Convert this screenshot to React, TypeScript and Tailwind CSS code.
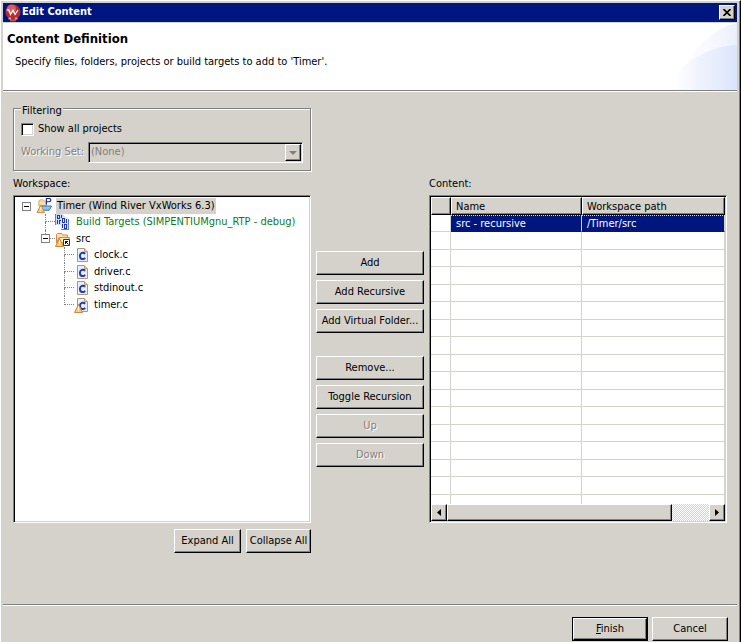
import type { ReactNode } from "react";

const raised =
  "border border-t-white border-l-white border-r-black border-b-black bg-[#d5d2cc] shadow-[inset_-1px_-1px_0_#808080]";
const sunken =
  "border border-t-[#808080] border-l-[#808080] border-r-white border-b-white p-px shadow-[inset_1px_1px_0_#000,inset_-1px_-1px_0_#d5d2cc]";
const etched = "text-[#808080] [text-shadow:1px_1px_0_#fff]";

function PushButton({
  children,
  disabled,
  className = "",
}: {
  children: ReactNode;
  disabled?: boolean;
  className?: string;
}) {
  return (
    <button
      type="button"
      disabled={disabled}
      className={`${raised} h-6 whitespace-nowrap text-center leading-[20px] ${disabled ? etched : ""} ${className}`}
    >
      {children}
    </button>
  );
}

function AppIcon() {
  return (
    <svg viewBox="0 0 16 18" className="h-[18px] w-4 shrink-0" aria-hidden="true">
      <path d="M4 13.500h8l-1.500 4h-5z" fill="#a85550" />
      <circle cx="8" cy="8" r="7.600" fill="#b92a30" />
      <circle cx="6.500" cy="5" r="4.600" fill="#d8605c" />
      <path d="M1.500 6h2.500l1.500 4.500L8 6l2 4.500L13 6" fill="none" stroke="#fff" strokeWidth="1.200" />
      <path d="M3.500 13.500h2.500v2h-2.500zM10 13.500h2.500v2h-2.500z" fill="#e49c98" />
    </svg>
  );
}

function WarningBadge() {
  return (
    <g>
      <path d="M4.500 7.500 8.500 15.500H.500z" fill="#f9c678" stroke="#c98a3a" strokeWidth="1" />
      <path d="M4 9.500h1v3H4zM4 13.500h1v1H4z" fill="#fff" />
    </g>
  );
}

function ProjectIcon() {
  return (
    <svg viewBox="0 0 17 17" className="h-4 w-[17px] shrink-0" aria-hidden="true">
      <path d="M2.500 3.500l1-1.500h4l1 1.500h2v5h-8z" fill="#f6dea0" stroke="#d3a75c" />
      <path d="M4.500 8.500H16l-2.500 4.500H6.500z" fill="#8fc4ee" stroke="#2f6fb0" />
      <path d="M10.500 7V.500h3a1.500 1.500 0 0 1 0 3.500h-3" fill="#fff" stroke="#1428c0" strokeWidth="1.200" />
      <WarningBadge />
    </svg>
  );
}

function TargetsIcon() {
  return (
    <svg viewBox="0 0 16 16" className="size-4 shrink-0" shapeRendering="crispEdges" aria-hidden="true">
      <path d="M1 0h6l3 3v8H1z" fill="#cfdcf8" />
      <path d="M6 3h6l2 2v10H6z" fill="#e4ecfc" />
      <path
        d="M2 1h3v1H2zM2 2h1v2H2zM4 2h1v2H4zM2 4h3v1H2zM6 1h1v3H6zM2 6h1v4H2zM4 6h2v1H4zM4 7h1v3H4zM7 4h3v1H7zM7 5h1v3H7zM9 5h1v3H9zM7 8h3v1H7zM11 5h1v4h-1zM7 10h1v4H7zM9 10h3v1H9zM9 11h1v3H9zM11 11h1v3h-1zM9 14h3v1H9z"
        fill="#1c35b8"
      />
      <path d="M13 5h1v10h-1zM6 15h8v1H6zM0 0h1v11H0z" fill="#5f80d8" />
    </svg>
  );
}

function SourceFolderIcon() {
  return (
    <svg viewBox="0 0 16 16" className="size-4 shrink-0" aria-hidden="true">
      <path d="M1.500 12V3.500l1-1h4l1 1.500h5V7" fill="#fbe3ae" stroke="#d08a3c" />
      <path d="M1.500 12 4 6.500h10.500L13 12z" fill="#fde9bc" stroke="#d08a3c" />
      <WarningBadge />
      <path d="M8.500 8.500h6v6h-6z" fill="#fff" stroke="#123a66" />
      <path d="M10.500 13v-2.500H13M10.500 10.500l3 3" fill="none" stroke="#000" />
    </svg>
  );
}

function CFileIcon({ warning }: { warning?: boolean }) {
  return (
    <svg viewBox="0 0 16 16" className="size-4 shrink-0" aria-hidden="true">
      <path d="M3.500 1.500h7l3 3v10h-10z" fill="#e6eefc" stroke="#a59a7c" />
      <path d="M10.500 1.500v3h3" fill="#f5d9a0" stroke="#c9a050" />
      <path
        d="M11.200 6.800C9.200 4.700 5.900 5.600 5.900 8.900s3.300 4.100 5.300 2"
        fill="none"
        stroke="#2438a8"
        strokeWidth="2"
      />
      {warning && <WarningBadge />}
    </svg>
  );
}

function Expander() {
  return (
    <button
      type="button"
      aria-label="Collapse"
      className="flex size-[9px] shrink-0 items-center justify-center border border-[#808080] bg-white"
    >
      <span className="h-px w-[5px] bg-black" />
    </button>
  );
}

function Branch({ last }: { last?: boolean }) {
  return (
    <span className="flex h-full w-[19px] shrink-0 flex-col pl-[9px]">
      <span className="h-1/2 border-b border-l border-dotted border-[#808080]" />
      <span className={last ? "h-1/2" : "h-1/2 border-l border-dotted border-[#808080]"} />
    </span>
  );
}

const files = [
  { name: "clock.c", row: "h-4" },
  { name: "driver.c", row: "h-[17px]" },
  { name: "stdinout.c", row: "h-4" },
  { name: "timer.c", row: "h-[17px]", warning: true },
];

function WorkspaceTree() {
  return (
    <ul aria-labelledby="workspace-label" className={`${sunken} h-[328px] overflow-hidden bg-white leading-4`}>
      <li className="pt-px pl-[2px]">
        <div className="flex h-4 items-center">
          <span className="flex w-[19px] shrink-0 pl-[5px]">
            <Expander />
          </span>
          <ProjectIcon />
          <span className="ml-[3px] bg-[#d5d2cc] pr-px pl-px whitespace-nowrap">Timer (Wind River VxWorks 6.3)</span>
        </div>
        <ul className="pl-[19px]">
          <li className="flex h-4 items-center">
            <Branch />
            <TargetsIcon />
            <span className="ml-[5px] whitespace-nowrap text-[#0f7a1c]">Build Targets (SIMPENTIUMgnu_RTP - debug)</span>
          </li>
          <li>
            <div className="flex h-[17px] items-center">
              <span className="flex h-full w-[19px] shrink-0 flex-col">
                <span className="ml-[9px] flex-1 border-l border-dotted border-[#808080]" />
                <span className="flex items-center pl-[5px]">
                  <Expander />
                  <span className="flex-1 border-t border-dotted border-[#808080]" />
                </span>
                <span className="flex-1" />
              </span>
              <SourceFolderIcon />
              <span className="ml-[5px]">src</span>
            </div>
            <ul className="pl-[19px]">
              {files.map((f, i) => (
                <li key={f.name} className={`flex items-center ${f.row}`}>
                  <Branch last={i === files.length - 1} />
                  <CFileIcon warning={f.warning} />
                  <span className="ml-1">{f.name}</span>
                </li>
              ))}
            </ul>
          </li>
        </ul>
      </li>
    </ul>
  );
}

const headCell =
  "h-[18px] border-t border-l border-r border-t-white border-l-white border-r-black border-b border-b-black p-0 pl-1 text-left font-normal shadow-[inset_-1px_-1px_0_#808080]";
const cell = "border-r border-b border-[#d5d2cc] p-0 pl-[5px]";
const selectedCell =
  "border-r border-t border-b border-r-[#d5d2cc] border-t-[#f0e040] border-b-[#00167f] [border-top-style:dotted] bg-[#00167f] p-0 pl-[5px]";

function ContentTable() {
  return (
    <div className={`${sunken} flex h-[328px] flex-col bg-white`}>
      <div className="min-h-0 flex-1 overflow-hidden">
        <table
          aria-labelledby="content-label"
          className="w-full table-fixed border-separate border-spacing-0 leading-[15px]"
        >
          <thead className="bg-[#d5d2cc]">
            <tr>
              <th className={`${headCell} w-5`} aria-label="Marker" />
              <th className={`${headCell} w-[131px]`}>Name</th>
              <th className={headCell}>Workspace path</th>
            </tr>
          </thead>
          <tbody>
            <tr className="h-[17px] text-white">
              <td className={cell} />
              <td className={selectedCell}>src - recursive</td>
              <td className={selectedCell}>/Timer/src</td>
            </tr>
            {Array.from({ length: 16 }, (_, i) => (
              <tr key={i} className="odd:h-[17px] even:h-[18px]">
                <td className={cell} />
                <td className={cell} />
                <td className={cell} />
              </tr>
            ))}
          </tbody>
        </table>
      </div>
      <div className="flex h-[17px] shrink-0 bg-[repeating-conic-gradient(#fff_0_25%,#d5d2cc_0_50%)] bg-[length:2px_2px]">
        <button type="button" aria-label="Scroll left" className={`${raised} flex w-4 items-center justify-center`}>
          <svg viewBox="0 0 4 7" className="h-[7px] w-1" aria-hidden="true">
            <path d="M4 0v7L0 3.500z" />
          </svg>
        </button>
        <div className={`${raised} flex-[6]`} />
        <div className="flex-1" />
        <button type="button" aria-label="Scroll right" className={`${raised} flex w-4 items-center justify-center`}>
          <svg viewBox="0 0 4 7" className="h-[7px] w-1" aria-hidden="true">
            <path d="M0 0v7l4-3.500z" />
          </svg>
        </button>
      </div>
    </div>
  );
}

export default function App() {
  return (
    <div className="flex min-h-screen flex-col border-t border-r border-l border-t-white border-r-black border-l-white bg-[#d5d2cc] pt-[2px] pr-[3px] pl-[2px] font-['DejaVu_Sans_Condensed','DejaVu_Sans',sans-serif] text-[11px] text-black shadow-[inset_-1px_0_0_#808080]">
      <header>
        <div className="flex h-[19px] items-center bg-[#00167f] pr-[2px] pl-[2px] text-white">
          <AppIcon />
          <h1 className="ml-px flex-1 font-bold">Edit Content</h1>
          <button
            type="button"
            aria-label="Close"
            className={`${raised} flex h-[15px] w-4 items-center justify-center text-black`}
          >
            <svg viewBox="0 0 8 7" className="h-[7px] w-2" aria-hidden="true">
              <path d="M.5 0 7.500 7M7.500 0 .5 7" stroke="#000" strokeWidth="1.600" />
            </svg>
          </button>
        </div>
        <div className="mt-px flex h-[68px] justify-between border-b border-[#808080] bg-white">
          <div className="pt-2 pl-1">
            <h2 className="text-[13px] leading-4 font-bold">Content Definition</h2>
            <p className="mt-[7px] pl-2 leading-4">
              Specify files, folders, projects or build targets to add to 'Timer'.
            </p>
          </div>
          <svg viewBox="0 0 62 67" className="h-[67px] w-[62px] shrink-0" aria-hidden="true">
            <defs>
              <linearGradient id="outer" x1="0" x2="1">
                <stop offset="0" stopColor="#fff" />
                <stop offset="0.500" stopColor="#fbf9fe" />
                <stop offset="1" stopColor="#ebeffd" />
              </linearGradient>
              <linearGradient id="inner" x1="0" x2="1">
                <stop offset="0" stopColor="#fff" />
                <stop offset="0.400" stopColor="#f0f3fd" />
                <stop offset="1" stopColor="#dae5fc" />
              </linearGradient>
            </defs>
            <path d="M0 67C14 30 34 6 62 0v67z" fill="url(#outer)" />
            <path d="M0 52C14 36 36 23 62 22v45H0z" fill="url(#inner)" />
          </svg>
        </div>
        <div className="h-px bg-white" />
      </header>

      <main className="grid grid-cols-[minmax(0,1fr)_108px_minmax(0,1fr)] gap-x-[5px] px-[10px] pt-[15px]">
        <section>
          <fieldset className="h-[64px] min-w-0 border border-[#808080] pr-[7px] pl-[7px] shadow-[1px_1px_0_#fff,inset_1px_1px_0_#fff]">
            <legend className="h-[2px] w-fit">
              <span className="block bg-[#d5d2cc] px-px leading-[8px]">Filtering</span>
            </legend>
            <label className="mt-[13px] flex h-[14px] items-center gap-1">
              <input
                type="checkbox"
                className={`${sunken} size-[13px] appearance-none bg-white`}
              />
              Show all projects
            </label>
            <div className="mt-[6px] flex items-center gap-1">
              <label htmlFor="working-set" className={`${etched} w-[63px] shrink-0 whitespace-nowrap`}>
                Working Set:
              </label>
              <div className="grid min-w-0 flex-1 items-center">
                <select
                  id="working-set"
                  disabled
                  className={`${sunken} col-start-1 row-start-1 h-[21px] w-full appearance-none bg-[#d5d2cc] pl-[2px] text-[#808080] opacity-100`}
                >
                  <option>(None)</option>
                </select>
                <span
                  className={`${raised} pointer-events-none col-start-1 row-start-1 mr-[2px] flex h-[17px] w-4 items-center justify-center justify-self-end`}
                >
                  <svg viewBox="0 0 8 4" className="h-1 w-2" aria-hidden="true">
                    <path d="M0 0h8L4 4z" fill="#808080" />
                  </svg>
                </span>
              </div>
            </div>
          </fieldset>
          <p id="workspace-label" className="pt-[5px] pb-[3px] leading-4">
            Workspace:
          </p>
          <WorkspaceTree />
          <div className="mt-[6px] flex justify-end gap-[5px]">
            <PushButton className="w-[67px]">Expand All</PushButton>
            <PushButton className="w-[65px]">Collapse All</PushButton>
          </div>
        </section>

        <div className="flex flex-col gap-[5px] pt-[144px]">
          <PushButton>Add</PushButton>
          <PushButton>Add Recursive</PushButton>
          <PushButton>Add Virtual Folder...</PushButton>
          <PushButton className="mt-[18px]">Remove...</PushButton>
          <PushButton>Toggle Recursion</PushButton>
          <PushButton disabled>Up</PushButton>
          <PushButton disabled>Down</PushButton>
        </div>

        <section className="pt-[64px]">
          <p id="content-label" className="pt-[5px] pb-[3px] leading-4">
            Content:
          </p>
          <ContentTable />
        </section>
      </main>

      <footer className="mt-auto border-t border-[#808080]">
        <div className="flex justify-end gap-1 border-t border-white pt-[11px] pr-[9px] pb-px">
          <button type="submit" className="w-[76px] border border-black">
            <span className={`${raised} block h-[22px] leading-[20px]`}>
              <u>F</u>inish
            </span>
          </button>
          <PushButton className="w-[76px]">Cancel</PushButton>
        </div>
      </footer>
    </div>
  );
}
